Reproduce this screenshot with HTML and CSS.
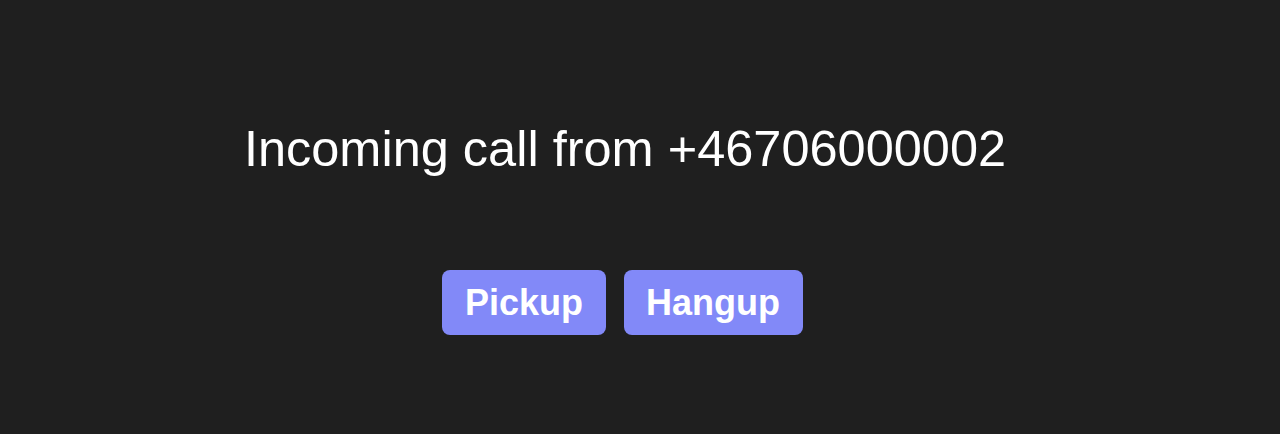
FILE: index.html
```html
<!DOCTYPE html>
<html lang="en">
<head>
  <meta charset="UTF-8" />
  <meta name="viewport" content="width=device-width, initial-scale=1" />
  <title>Incoming call</title>
  <link rel="stylesheet" href="styles.css">
</head>
<body>
  <div class="call-screen">
    <h1 class="call-title">Incoming call from +46706000002</h1>
    <div class="call-actions">
      <button class="call-button">Pickup</button>
      <button class="call-button">Hangup</button>
    </div>
  </div>
</body>
</html>
```

FILE: styles.css
```css
* {
  box-sizing: border-box;
  margin: 0;
  padding: 0;
}

body {
  background-color: #1f1f1f;
  color: #ffffff;
  font-family: 'Liberation Sans', Arial, sans-serif;
  height: 100vh;
}

.call-screen {
  display: flex;
  flex-direction: column;
  align-items: center;
  padding-top: 118px;
  padding-right: 30px;
}

.call-title {
  font-size: 50.5px;
  font-weight: 400;
  line-height: 62px;
}

.call-actions {
  display: flex;
  gap: 18px;
  margin-top: 90px;
  margin-right: 5px;
}

.call-button {
  background: #8289f8;
  color: #ffffff;
  border: none;
  border-radius: 8px;
  height: 65px;
  padding: 0 22.5px;
  font-family: 'Liberation Sans', Arial, sans-serif;
  font-size: 36px;
  font-weight: 700;
  cursor: pointer;
}
```
